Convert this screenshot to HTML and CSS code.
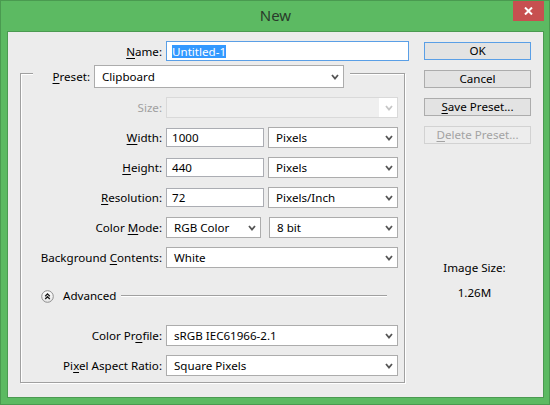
FILE: index.html
```html
<!DOCTYPE html>
<html>
<head>
<meta charset="utf-8">
<link rel="stylesheet" href="styles.css">
</head>
<body>
<div class="window">
  <div class="titlebar">
    <div class="title">New</div>
    <div class="close">
      <svg width="9" height="8" viewBox="0 0 9 8"><path d="M1 0.5 L8 7.5 M8 0.5 L1 7.5" stroke="#fff" stroke-width="2" fill="none"/></svg>
    </div>
  </div>
  <div class="frame">
    <div class="main">
      <div class="name-row">
        <div class="lbl"><u>N</u>ame:</div>
        <div class="input name"><span class="sel">Untitled-1</span></div>
      </div>
      <div class="group">
        <div class="group-head">
          <div class="lbl"><u>P</u>reset:</div>
          <div class="select tall"><span>Clipboard</span><svg class="chev" width="8" height="6" viewBox="0 0 8 6"><path d="M1 1 L4 4.5 L7 1" stroke="#555" stroke-width="1.8" fill="none"/></svg></div>
        </div>
        <div class="rows">
          <div class="lbl disabled">Size:</div>
          <div class="select off"><span></span><svg class="chev" width="8" height="6" viewBox="0 0 8 6"><path d="M1 1 L4 4.5 L7 1" stroke="#c6c6c6" stroke-width="1.8" fill="none"/></svg></div>

          <div class="lbl"><u>W</u>idth:</div>
          <div class="pair">
            <div class="input w98">1000</div>
            <div class="select w130"><span>Pixels</span><svg class="chev" width="8" height="6" viewBox="0 0 8 6"><path d="M1 1 L4 4.5 L7 1" stroke="#555" stroke-width="1.8" fill="none"/></svg></div>
          </div>

          <div class="lbl"><u>H</u>eight:</div>
          <div class="pair">
            <div class="input w98">440</div>
            <div class="select w130"><span>Pixels</span><svg class="chev" width="8" height="6" viewBox="0 0 8 6"><path d="M1 1 L4 4.5 L7 1" stroke="#555" stroke-width="1.8" fill="none"/></svg></div>
          </div>

          <div class="lbl"><u>R</u>esolution:</div>
          <div class="pair">
            <div class="input w98">72</div>
            <div class="select w130"><span>Pixels/Inch</span><svg class="chev" width="8" height="6" viewBox="0 0 8 6"><path d="M1 1 L4 4.5 L7 1" stroke="#555" stroke-width="1.8" fill="none"/></svg></div>
          </div>

          <div class="lbl">Color <u>M</u>ode:</div>
          <div class="pair wide">
            <div class="select w95"><span>RGB Color</span><svg class="chev" width="8" height="6" viewBox="0 0 8 6"><path d="M1 1 L4 4.5 L7 1" stroke="#555" stroke-width="1.8" fill="none"/></svg></div>
            <div class="select w129"><span>8 bit</span><svg class="chev" width="8" height="6" viewBox="0 0 8 6"><path d="M1 1 L4 4.5 L7 1" stroke="#555" stroke-width="1.8" fill="none"/></svg></div>
          </div>

          <div class="lbl">Background <u>C</u>ontents:</div>
          <div class="select"><span>White</span><svg class="chev" width="8" height="6" viewBox="0 0 8 6"><path d="M1 1 L4 4.5 L7 1" stroke="#555" stroke-width="1.8" fill="none"/></svg></div>

          <div class="advanced">
            <svg class="adv-icon" width="13" height="13" viewBox="0 0 13 13">
              <defs><linearGradient id="g" x1="0" y1="0" x2="0" y2="1"><stop offset="0" stop-color="#ffffff"/><stop offset="1" stop-color="#e6e6e6"/></linearGradient></defs>
              <circle cx="6.5" cy="6.5" r="5.8" fill="url(#g)" stroke="#8e8e8e" stroke-width="1"/>
              <path d="M4.2 6.2 L6.5 3.9 L8.8 6.2 M4.2 9 L6.5 6.7 L8.8 9" stroke="#1a1a1a" stroke-width="1.3" fill="none"/>
            </svg>
            <span class="adv-text">Advanced</span>
            <span class="adv-line"></span>
          </div>

          <div class="lbl">Color Pr<u>o</u>file:</div>
          <div class="select"><span>sRGB IEC61966-2.1</span><svg class="chev" width="8" height="6" viewBox="0 0 8 6"><path d="M1 1 L4 4.5 L7 1" stroke="#555" stroke-width="1.8" fill="none"/></svg></div>

          <div class="lbl">Pi<u>x</u>el Aspect Ratio:</div>
          <div class="select"><span>Square Pixels</span><svg class="chev" width="8" height="6" viewBox="0 0 8 6"><path d="M1 1 L4 4.5 L7 1" stroke="#555" stroke-width="1.8" fill="none"/></svg></div>
        </div>
      </div>
    </div>
    <div class="side">
      <div class="buttons">
        <div class="btn default">OK</div>
        <div class="btn">Cancel</div>
        <div class="btn"><u>S</u>ave Preset...</div>
        <div class="btn off"><u>D</u>elete Preset...</div>
      </div>
      <div class="info">
        <div>Image Size:</div>
        <div class="val">1.26M</div>
      </div>
    </div>
  </div>
</div>
</body>
</html>
```

FILE: styles.css
```css
* { box-sizing: border-box; margin: 0; padding: 0; }
html, body { width: 550px; height: 405px; overflow: hidden; }
body {
  font-family: "Noto Sans", "Liberation Sans", sans-serif;
  font-size: 11.6px;
  color: #000;
}
u { text-underline-offset: 2px; }

.window {
  width: 550px;
  height: 405px;
  background: #5cba62;
  border: 1px solid #4a9a50;
  padding: 0 5px 6px 6px;
  display: flex;
  flex-direction: column;
}
.titlebar {
  height: 30px;
  flex: none;
  display: grid;
  grid-template-columns: 1fr auto 1fr;
  align-items: start;
}
.title {
  grid-column: 2;
  font-size: 15px;
  line-height: 29px;
  color: #2a3a2b;
}
.close {
  grid-column: 3;
  justify-self: end;
  width: 31px;
  height: 20px;
  background: #c75050;
  display: flex;
  align-items: center;
  justify-content: center;
}
.close svg { display: block; }

.frame {
  flex: 1;
  border: 1px solid #4b9a51;
  background: #ececec;
  display: flex;
  align-items: flex-start;
}
.main {
  margin-left: 12px;
  padding-top: 9px;
  width: 389px;
  flex: none;
}
.lbl {
  text-align: right;
  white-space: nowrap;
  line-height: 16px;
  padding-top: 1px;
}
.lbl.disabled { color: #a0a0a0; }

.name-row {
  display: grid;
  grid-template-columns: 142px 243px;
  column-gap: 4px;
  align-items: center;
}
.input {
  height: 19px;
  border: 1px solid #abadb3;
  background: #fff;
  padding-left: 5px;
  display: flex;
  align-items: center;
  line-height: 16px;
  white-space: nowrap;
}
.input.name { height: 20px; border-color: #5a9fe6; }
.sel { background: #3399ff; color: #fff; line-height: 13px; }

.select {
  height: 21px;
  border: 1px solid #acacac;
  background: #fff;
  padding: 0 4px 0 7px;
  display: flex;
  align-items: center;
  justify-content: space-between;
  line-height: 16px;
  white-space: nowrap;
}
.select.tall { height: 23px; }
.select.off {
  border-color: #d9d9d9;
  background: linear-gradient(to right, #efefef 0, #efefef calc(100% - 18px), #fff calc(100% - 18px));
}
.chev { display: block; flex: none; }

.group {
  margin-top: 12px;
  width: 385px;
  border: 1px solid #a0a0a0;
  box-shadow: 1px 1px 0 #fff, inset 1px 1px 0 #fff;
  padding-bottom: 6px;
}
.group-head {
  margin: -9px 0 0 12px;
  width: fit-content;
  display: grid;
  grid-template-columns: 57px 250px;
  column-gap: 4px;
  padding-right: 6px;
  background: #ececec;
  align-items: center;
}
.rows {
  margin-top: 9px;
  display: grid;
  grid-template-columns: 141px 232px;
  column-gap: 4px;
  row-gap: 9px;
  align-items: center;
}
.pair { display: flex; align-items: center; gap: 4px; }
.pair.wide { gap: 8px; }
.w98 { width: 98px; }
.w130 { width: 130px; }
.w95 { width: 95px; }
.w129 { width: 129px; }

.advanced {
  grid-column: 1 / -1;
  display: flex;
  align-items: center;
  height: 16px;
  margin: 11px 0 12px 20px;
  padding-right: 11px;
}
.adv-icon { display: block; flex: none; }
.adv-text { margin-left: 9px; line-height: 16px; }
.adv-line {
  flex: 1;
  height: 2px;
  margin-left: 5px;
  border-top: 1px solid #a0a0a0;
  border-bottom: 1px solid #fff;
}

.side {
  margin-left: 15px;
  width: 107px;
  flex: none;
  padding-top: 10px;
}
.buttons { display: flex; flex-direction: column; gap: 10px; }
.btn {
  height: 18px;
  border: 1px solid #acacac;
  background: #e3e3e3;
  text-align: center;
  line-height: 16px;
}
.btn.default { border-color: #5a9fe6; }
.btn.off { border-color: #d2d2d2; background: #ededed; color: #a3a3a3; }
.info {
  margin-top: 116px;
  text-align: center;
  line-height: 16px;
  padding-right: 6px;
}
.info .val { margin-top: 9px; }
```
